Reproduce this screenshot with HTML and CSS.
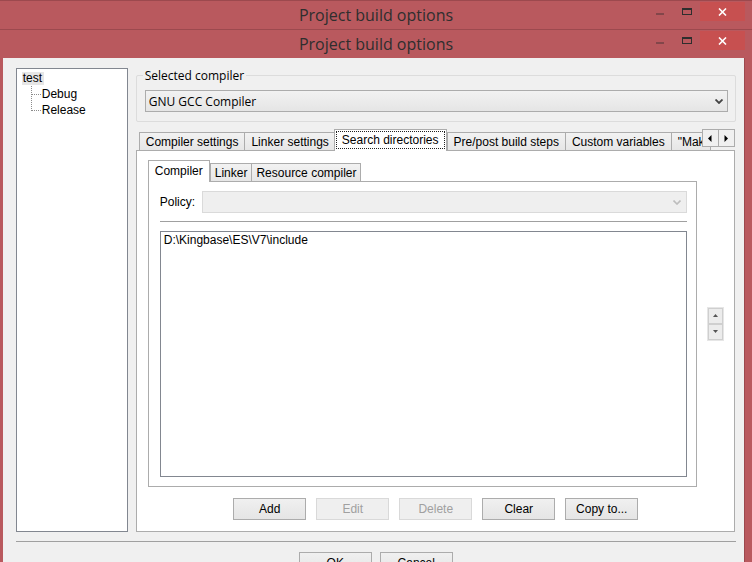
FILE: index.html
```html
<!DOCTYPE html>
<html lang="en">
<head>
    <meta charset="UTF-8">
    <title>Project build options</title>
    <link rel="stylesheet" href="styles.css">
</head>
<body>
    <div class="titlebar">
        <span class="title">Project build options</span>
        <span class="cap-min"></span>
        <span class="cap-max"></span>
        <span class="cap-close"><svg width="9" height="8" viewBox="0 0 9 8"><path d="M1 0.5 L8 7.5 M8 0.5 L1 7.5" stroke="#fff" stroke-width="1.6"/></svg></span>
    </div>
    <div class="titlebar">
        <span class="title">Project build options</span>
        <span class="cap-min"></span>
        <span class="cap-max"></span>
        <span class="cap-close"><svg width="9" height="8" viewBox="0 0 9 8"><path d="M1 0.5 L8 7.5 M8 0.5 L1 7.5" stroke="#fff" stroke-width="1.6"/></svg></span>
    </div>

    <div class="frame">
        <div class="edge-left"></div>
        <div class="client">
            <div class="main">
                <div class="tree">
                    <div class="node"><span class="node-sel">test</span></div>
                    <ul class="children">
                        <li>Debug</li>
                        <li>Release</li>
                    </ul>
                </div>

                <div class="right">
                    <div class="group">
                        <span class="group-label">Selected compiler</span>
                        <div class="combo">
                            <span>GNU GCC Compiler</span>
                            <svg width="8" height="5" viewBox="0 0 8 5"><path d="M0.5 0.5 L4 4 L7.5 0.5" stroke="#444" stroke-width="1.8" fill="none"/></svg>
                        </div>
                    </div>

                    <div class="tabs">
                        <div class="tab">Compiler settings</div>
                        <div class="tab">Linker settings</div>
                        <div class="tab active"><span class="focus">Search directories</span></div>
                        <div class="tab">Pre/post build steps</div>
                        <div class="tab">Custom variables</div>
                        <div class="tab last">"Make" commands</div>
                        <div class="tab-scroll">
                            <span class="scroll-btn"><svg width="4" height="7" viewBox="0 0 4 7"><path d="M3.5 0 L0 3.5 L3.5 7 Z" fill="#000"/></svg></span>
                            <span class="scroll-btn"><svg width="4" height="7" viewBox="0 0 4 7"><path d="M0.5 0 L4 3.5 L0.5 7 Z" fill="#000"/></svg></span>
                        </div>
                    </div>

                    <div class="panel">
                        <div class="panel-body">
                            <div class="inner">
                                <div class="tabs inner-tabs">
                                    <div class="tab active">Compiler</div>
                                    <div class="tab">Linker</div>
                                    <div class="tab">Resource compiler</div>
                                </div>
                                <div class="inner-panel">
                                    <div class="policy">
                                        <span class="policy-label">Policy:</span>
                                        <div class="combo disabled">
                                            <span></span>
                                            <svg width="8" height="5" viewBox="0 0 8 5"><path d="M0.5 0.5 L4 4 L7.5 0.5" stroke="#bdbdbd" stroke-width="1.6" fill="none"/></svg>
                                        </div>
                                    </div>
                                    <div class="hline"></div>
                                    <div class="listbox">D:\Kingbase\ES\V7\include</div>
                                </div>
                            </div>
                            <div class="spinner">
                                <span class="spin-btn"><svg width="5" height="3" viewBox="0 0 5 3"><path d="M0 3 L2.5 0 L5 3 Z" fill="#555"/></svg></span>
                                <span class="spin-btn"><svg width="5" height="3" viewBox="0 0 5 3"><path d="M0 0 L2.5 3 L5 0 Z" fill="#555"/></svg></span>
                            </div>
                        </div>
                        <div class="btn-row">
                            <button>Add</button>
                            <button disabled>Edit</button>
                            <button disabled>Delete</button>
                            <button>Clear</button>
                            <button>Copy to...</button>
                        </div>
                    </div>
                </div>
            </div>

            <div class="sep"></div>
            <div class="dlg-buttons">
                <button>OK</button>
                <button>Cancel</button>
            </div>
        </div>
        <div class="edge-right"></div>
    </div>
</body>
</html>
```

FILE: styles.css
```css
* {
    box-sizing: border-box;
}

body {
    margin: 0;
    width: 752px;
    height: 562px;
    overflow: hidden;
    background-color: #b9595e;
    font-family: "Liberation Sans", Arial, sans-serif;
    font-size: 12px;
    color: #000;
}

/* window caption */
.titlebar {
    position: relative;
    height: 29px;
    border-top: 1px solid #9c494e;
    background-color: #b9595e;
}

.title {
    display: block;
    text-align: center;
    font-family: "Open Sans", sans-serif;
    font-size: 16px;
    line-height: 29px;
    color: #2e2e2e;
}

.cap-min {
    position: absolute;
    left: 656px;
    top: 12px;
    width: 8px;
    height: 2px;
    background-color: #83464a;
}

.cap-max {
    position: absolute;
    left: 682px;
    top: 7px;
    width: 10px;
    height: 7px;
    border: 1px solid #2e2e2e;
    border-top-width: 2px;
}

.cap-close {
    position: absolute;
    left: 700px;
    top: 1px;
    width: 45px;
    height: 19px;
    background-color: #c75050;
    display: flex;
    align-items: center;
    justify-content: center;
}

/* dialog frame */
.frame {
    display: flex;
    height: 504px;
}

.edge-left {
    width: 3px;
}

.edge-right {
    width: 9px;
    border-left: 1px solid #9c494e;
}

.client {
    flex: 1;
    background-color: #f0f0f0;
    padding: 10px 8px 0 13px;
}

.main {
    display: flex;
    gap: 8px;
    height: 464px;
}

/* project tree */
.tree {
    width: 112px;
    border: 1px solid #828790;
    background-color: #fff;
    padding: 1px 0 0 5px;
}

.node {
    height: 16px;
    line-height: 16px;
}

.node-sel {
    display: inline-block;
    line-height: 13px;
    padding: 0 2px 0 1px;
    background-color: #e6e6e6;
}

.children {
    margin: 0;
    padding: 0;
    list-style-type: none;
}

.children li {
    position: relative;
    margin-left: 9px;
    padding-left: 11px;
    height: 16px;
    line-height: 16px;
}

.children li::before {
    content: "";
    position: absolute;
    left: 0;
    top: -8px;
    width: 9px;
    height: 16px;
    border-left: 1px dotted #8c8c8c;
    border-bottom: 1px dotted #8c8c8c;
}

.children li:first-child::before {
    top: 0;
    height: 8px;
}

/* right side */
.right {
    flex: 1;
    display: flex;
    flex-direction: column;
}

.group {
    position: relative;
    margin-top: 7px;
    height: 47px;
    border: 1px solid #dcdcdc;
    border-radius: 2px;
    padding: 14px 7px 0 8px;
}

.group-label {
    position: absolute;
    top: -9px;
    left: 6px;
    padding: 0 2px;
    background-color: #f0f0f0;
    font-family: "Open Sans", sans-serif;
    font-size: 12px;
    line-height: 17px;
}

.combo {
    height: 22px;
    border: 1px solid #acacac;
    background: linear-gradient(#f2f2f2, #e5e5e5);
    display: flex;
    align-items: center;
    justify-content: space-between;
    padding: 0 4px 0 3px;
    font-family: "Open Sans", sans-serif;
    font-size: 12px;
}

.combo.disabled {
    flex: 1;
    border-color: #dadada;
    background: #efefef;
    padding-right: 5px;
}

/* tabs */
.tabs {
    position: relative;
    z-index: 1;
    display: flex;
    align-items: flex-end;
    height: 21px;
    margin-top: 7px;
    padding-left: 3px;
}

.tab {
    height: 18px;
    border: 1px solid #acacac;
    border-bottom: 0;
    background: linear-gradient(#f2f2f2, #e6e6e6);
    padding: 0 6px;
    line-height: 18px;
    white-space: nowrap;
    margin-right: -1px;
}

.tab.active {
    height: 22px;
    margin: 0 0 -1px -1px;
    padding: 1px 1px 0;
    background: #fff;
    line-height: 18px;
}

.focus {
    display: block;
    border: 1px dotted #222;
    padding: 0 5px;
    line-height: 16px;
}

.tab.last {
    width: 40px;
    overflow: hidden;
}

.tab-scroll {
    position: absolute;
    right: 1px;
    top: 0;
    display: flex;
}

.scroll-btn {
    width: 17px;
    height: 18px;
    border: 1px solid #acacac;
    background-color: #f0f0f0;
    margin-left: -1px;
    display: flex;
    align-items: center;
    justify-content: center;
}

.panel {
    flex: 1;
    margin-right: 1px;
    border: 1px solid #acacac;
    background-color: #fff;
    padding: 9px 10px 10px 11px;
}

.panel-body {
    display: flex;
    align-items: center;
}

.inner {
    width: 549px;
}

.inner-tabs {
    margin-top: 0;
    padding-left: 0;
}

.inner-tabs .tab {
    padding: 0 4px;
}

.inner-tabs .tab.active {
    margin-left: 0;
    padding: 1px 6px 0;
}

.inner-panel {
    height: 306px;
    border: 1px solid #acacac;
    padding: 9px 9px 0 11px;
}

.policy {
    display: flex;
    align-items: center;
}

.policy-label {
    width: 42px;
}

.hline {
    margin-top: 8px;
    height: 1px;
    background-color: #a0a0a0;
}

.listbox {
    margin-top: 9px;
    height: 246px;
    border: 1px solid #828790;
    padding: 2px 3px;
    line-height: 13px;
}

.spinner {
    margin-left: 10px;
    width: 17px;
    border: 1px solid #e6e6e6;
    display: flex;
    flex-direction: column;
}

.spin-btn {
    height: 16px;
    border: 1px solid #cfcfcf;
    background-color: #ececec;
    display: flex;
    align-items: center;
    justify-content: center;
}

/* buttons */
button {
    width: 73px;
    height: 22px;
    border: 1px solid #acacac;
    border-radius: 0;
    background: linear-gradient(#f0f0f0, #e5e5e5);
    font-family: "Liberation Sans", Arial, sans-serif;
    font-size: 12px;
    color: #000;
    padding: 0;
}

button:disabled {
    border-color: #d9d9d9;
    background: #efefef;
    color: #a0a0a0;
}

.btn-row {
    display: flex;
    justify-content: center;
    gap: 10px;
    margin-top: 11px;
}

.sep {
    margin-top: 9px;
    height: 1px;
    background-color: #a0a0a0;
}

.dlg-buttons {
    display: flex;
    justify-content: center;
    gap: 8px;
    margin-top: 10px;
}
```
